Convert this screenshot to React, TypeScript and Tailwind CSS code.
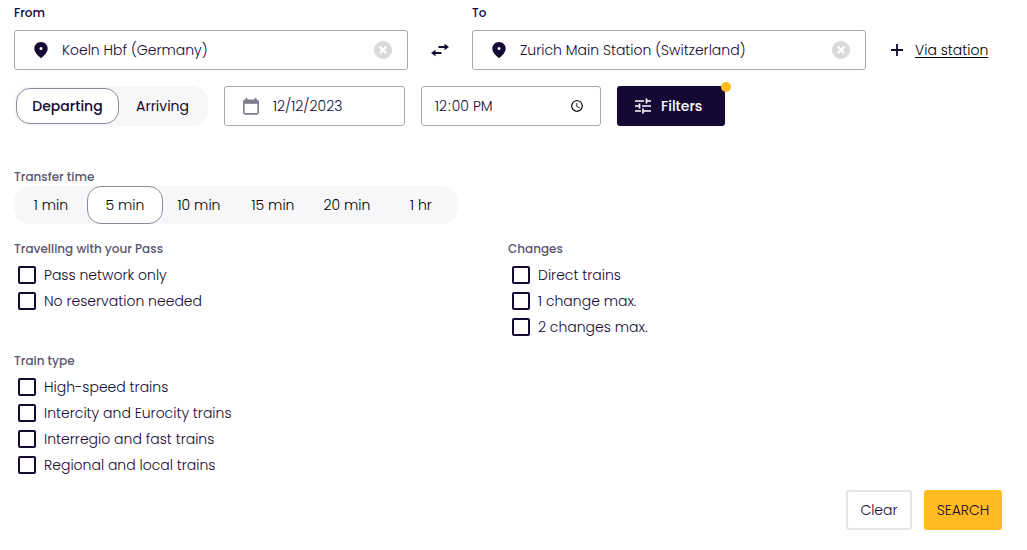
import { useState } from "react";
import type { ReactNode } from "react";

function PinIcon() {
  return (
    <svg viewBox="0 0 14 16" className="h-4 w-3.5 shrink-0" fill="#150934" aria-hidden="true">
      <path
        fillRule="evenodd"
        d="M7 0C3.2 0 .3 2.9.3 6.6c0 2 .9 3.7 2.2 5.3C3.8 13.5 5.3 14.8 7 16.2c1.7-1.4 3.2-2.7 4.500-4.300 1.300-1.600 2.200-3.300 2.200-5.300C13.7 2.900 10.800 0 7 0Zm0 5.100a1.500 1.500 0 1 1 0 3 1.500 1.500 0 0 1 0-3Z"
      />
    </svg>
  );
}

function ClearIcon() {
  return (
    <svg viewBox="0 0 18 18" className="size-[18px]" aria-hidden="true">
      <circle cx="9" cy="9" r="9" fill="#d9d9db" />
      <path d="M5.800 5.800l6.400 6.400M12.200 5.800l-6.400 6.400" stroke="#fff" strokeWidth="2.200" />
    </svg>
  );
}

function SwapIcon() {
  return (
    <svg viewBox="0 0 18 14" className="h-3.5 w-[18px]" fill="#150934" aria-hidden="true">
      <path d="M7.500 3.100h6V.8L18 4l-4.500 3.200V4.900h-6ZM10.500 9.100h-6V6.800L0 10l4.500 3.200v-2.300h6Z" />
    </svg>
  );
}

function CalendarIcon() {
  return (
    <svg viewBox="0 0 16 17" className="h-[17px] w-4 shrink-0" aria-hidden="true">
      <path d="M3.500 0v3M12.500 0v3" stroke="#7f7b8c" strokeWidth="1.800" />
      <rect x=".8" y="2.300" width="14.400" height="13.600" rx="1.500" fill="none" stroke="#7f7b8c" strokeWidth="1.600" />
      <path d="M1 2h14v3.800H1z" fill="#7f7b8c" />
    </svg>
  );
}

function TuneIcon() {
  return (
    <svg viewBox="0 0 16 16" className="size-4" stroke="#fff" strokeWidth="1.700" aria-hidden="true">
      <path d="M0 3h9M12 3h4M11.500.500v5M0 8h3.500M7 8h9M4.500 5.500v5M0 13h6M9 13h7M8 10.500v5" />
    </svg>
  );
}

function StationField({ id, label, initial }: { id: string; label: string; initial: string }) {
  const [value, setValue] = useState(initial);
  return (
    <div className="flex min-w-0 flex-col gap-2">
      <label htmlFor={id} className="text-xs leading-[18px] font-medium">
        {label}
      </label>
      <div className="flex h-10 items-center rounded-[3px] border border-[#aaa9b2] pr-[15px] pl-[19px]">
        <PinIcon />
        <input
          id={id}
          type="text"
          value={value}
          onChange={(e) => setValue(e.target.value)}
          className="ml-3.5 min-w-0 flex-1 bg-transparent font-light outline-none"
        />
        <button type="button" aria-label={`Clear ${label}`} onClick={() => setValue("")}>
          <ClearIcon />
        </button>
      </div>
    </div>
  );
}

function CheckGroup({ title, options }: { title: string; options: string[] }) {
  return (
    <fieldset>
      <legend className="mb-1 text-xs leading-[18px] font-medium text-[#5b5570]">{title}</legend>
      {options.map((option) => (
        <label key={option} className="flex h-[26px] items-center gap-2 pl-1 font-light">
          <input
            type="checkbox"
            className="size-[18px] appearance-none rounded-xs border-2 border-[#150934] checked:bg-[#150934]"
          />
          {option}
        </label>
      ))}
    </fieldset>
  );
}

function Segment({
  active,
  onClick,
  className,
  children,
}: {
  active: boolean;
  onClick: () => void;
  className: string;
  children: ReactNode;
}) {
  return (
    <button
      type="button"
      aria-pressed={active}
      onClick={onClick}
      className={`rounded-[14px] border ${active ? "border-[#8f8b9c] bg-white" : "border-transparent"} ${className}`}
    >
      {children}
    </button>
  );
}

const times = ["1 min", "5 min", "10 min", "15 min", "20 min", "1 hr"];

export default function App() {
  const [mode, setMode] = useState("Departing");
  const [transfer, setTransfer] = useState("5 min");

  return (
    <form
      onSubmit={(e) => e.preventDefault()}
      className="bg-white pt-1 pr-[25px] pb-5 pl-3.5 font-[Poppins,Inter,sans-serif] text-sm text-[#150934]"
    >
      <div className="grid grid-cols-[1fr_64px_1fr_136px] items-end">
        <StationField id="from" label="From" initial="Koeln Hbf (Germany)" />
        <button type="button" aria-label="Swap stations" className="flex h-10 items-center justify-center">
          <SwapIcon />
        </button>
        <StationField id="to" label="To" initial="Zurich Main Station (Switzerland)" />
        <a href="#via" className="flex h-10 items-center gap-3 pl-[25px] font-light text-black">
          <svg viewBox="0 0 12 12" className="size-3" stroke="#150934" strokeWidth="1.800" aria-hidden="true">
            <path d="M6 0v12M0 6h12" />
          </svg>
          <span className="underline underline-offset-2">Via station</span>
        </a>
      </div>

      <div className="mt-4 flex flex-wrap gap-4">
        <div className="flex h-10 rounded-2xl bg-[#f7f7f9] p-0.5">
          <Segment
            active={mode === "Departing"}
            onClick={() => setMode("Departing")}
            className={`w-[103px] ${mode === "Departing" ? "font-medium" : ""}`}
          >
            Departing
          </Segment>
          <Segment
            active={mode === "Arriving"}
            onClick={() => setMode("Arriving")}
            className={`w-[87px] ${mode === "Arriving" ? "font-medium" : ""}`}
          >
            Arriving
          </Segment>
        </div>
        <div className="flex h-10 w-[181px] items-center gap-3.5 rounded-[3px] border border-[#aaa9b2] px-[18px]">
          <CalendarIcon />
          <input
            type="text"
            aria-label="Date"
            defaultValue="12/12/2023"
            className="min-w-0 flex-1 bg-transparent font-light outline-none"
          />
        </div>
        <input
          type="time"
          aria-label="Time"
          defaultValue="12:00"
          className="h-10 w-[180px] rounded-[3px] border border-[#aaa9b2] px-3 font-light outline-none"
        />
        <button
          type="button"
          className="relative flex h-10 w-[108px] items-center gap-2.5 rounded-[3px] bg-[#150934] pl-[18px] font-medium text-white"
        >
          <TuneIcon />
          Filters
          <span className="absolute -top-1 -right-1.5 size-2.5 rounded-full bg-[#ffbb22]" />
        </button>
      </div>

      <div className="mt-[42px]">
        <div id="transfer-label" className="text-xs leading-[18px] font-medium text-[#5b5570]">
          Transfer time
        </div>
        <div
          role="group"
          aria-labelledby="transfer-label"
          className="inline-grid h-[38px] grid-cols-6 rounded-2xl bg-[#f7f7f9] align-top"
        >
          {times.map((time) => (
            <Segment
              key={time}
              active={transfer === time}
              onClick={() => setTransfer(time)}
              className={`font-light text-black ${transfer === time ? "-mx-px w-[76px]" : "w-[74px]"}`}
            >
              {time}
            </Segment>
          ))}
        </div>
      </div>

      <div className="mt-4 grid grid-cols-2 gap-y-3">
        <CheckGroup title="Travelling with your Pass" options={["Pass network only", "No reservation needed"]} />
        <CheckGroup title="Changes" options={["Direct trains", "1 change max.", "2 changes max."]} />
        <CheckGroup
          title="Train type"
          options={[
            "High-speed trains",
            "Intercity and Eurocity trains",
            "Interregio and fast trains",
            "Regional and local trains",
          ]}
        />
      </div>

      <div className="mt-3 flex justify-end gap-3 font-light">
        <button type="reset" className="h-10 w-[66px] rounded-[3px] border-2 border-[#e6e6ea]">
          Clear
        </button>
        <button type="submit" className="h-10 w-[78px] rounded-[3px] bg-[#ffbb22]">
          SEARCH
        </button>
      </div>
    </form>
  );
}
